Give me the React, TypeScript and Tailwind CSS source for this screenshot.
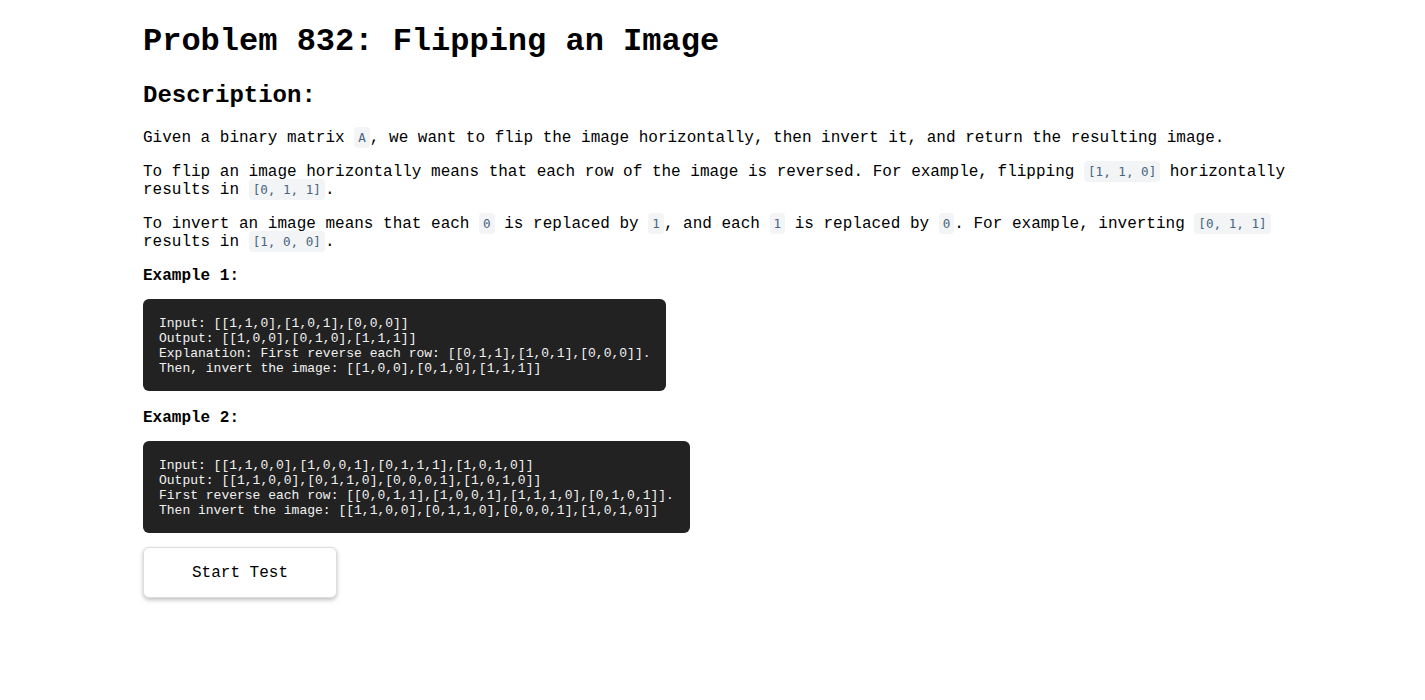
const mono = { fontFamily: '"Liberation Mono", "Courier New", monospace' }

function Code({ children }: { children: React.ReactNode }) {
  return (
    <code className="rounded-[4px] bg-[#f3f4f5] px-[4px] py-[3px] font-['DejaVu_Sans_Mono',monospace] text-[12.6px] text-[#476582]">
      {children}
    </code>
  )
}

function Block({ lines }: { lines: string[] }) {
  return (
    <pre className="-mt-[2px] mb-[2px] w-fit rounded-[6px] bg-[#222222] px-4 pt-[17px] pb-[15px] font-['Liberation_Mono',monospace] text-[13px] leading-[15px] text-[#f2f2f2]">
      {lines.join('\n')}
    </pre>
  )
}

export default function App() {
  return (
    <div className="min-h-[700px] bg-white text-black" style={mono}>
      <div className="ml-[143px] w-[1180px] pt-[24px]">
        <h1 className="text-[32px] leading-[36px] font-bold">Problem 832: Flipping an Image</h1>
        <h2 className="mt-[22px] text-[24px] leading-[27px] font-bold">Description:</h2>

        <div className="mt-[20px] flex flex-col gap-4 text-[16px] leading-[18px]">
          <p>
            Given a binary matrix <Code>A</Code>, we want to flip the image horizontally, then invert it, and
            return the resulting image.
          </p>
          <p>
            To flip an image horizontally means that each row of the image is reversed. For example, flipping{' '}
            <Code>[1, 1, 0]</Code> horizontally results in <Code>[0, 1, 1]</Code>.
          </p>
          <p>
            To invert an image means that each <Code>0</Code> is replaced by <Code>1</Code>, and each{' '}
            <Code>1</Code> is replaced by <Code>0</Code>. For example, inverting <Code>[0, 1, 1]</Code> results
            in <Code>[1, 0, 0]</Code>.
          </p>

          <p className="font-bold">Example 1:</p>
          <Block
            lines={[
              'Input: [[1,1,0],[1,0,1],[0,0,0]]',
              'Output: [[1,0,0],[0,1,0],[1,1,1]]',
              'Explanation: First reverse each row: [[0,1,1],[1,0,1],[0,0,0]].',
              'Then, invert the image: [[1,0,0],[0,1,0],[1,1,1]]',
            ]}
          />

          <p className="font-bold">Example 2:</p>
          <Block
            lines={[
              'Input: [[1,1,0,0],[1,0,0,1],[0,1,1,1],[1,0,1,0]]',
              'Output: [[1,1,0,0],[0,1,1,0],[0,0,0,1],[1,0,1,0]]',
              'First reverse each row: [[0,0,1,1],[1,0,0,1],[1,1,1,0],[0,1,0,1]].',
              'Then invert the image: [[1,1,0,0],[0,1,1,0],[0,0,0,1],[1,0,1,0]]',
            ]}
          />
        </div>

        <button className="mt-[12px] h-[51px] w-[194px] rounded-[6px] border border-[#dcdcdc] bg-white text-[16px] text-black shadow-[0_2px_4px_rgba(0,0,0,0.25)]">
          Start Test
        </button>
      </div>
    </div>
  )
}
